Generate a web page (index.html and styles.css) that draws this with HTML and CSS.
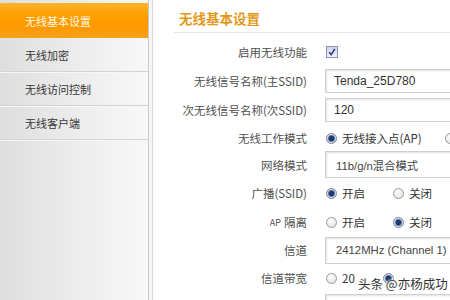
FILE: index.html
```html
<!DOCTYPE html>
<html lang="zh-CN">
<head>
<meta charset="utf-8">
<title>无线基本设置</title>
<link rel="stylesheet" href="styles.css">
</head>
<body>
<div class="page">
  <nav class="sidebar">
    <div class="nav-item active">无线基本设置</div>
    <div class="nav-item">无线加密</div>
    <div class="nav-item">无线访问控制</div>
    <div class="nav-item">无线客户端</div>
  </nav>
  <div class="divider"></div>
  <main class="content">
    <h1 class="title">无线基本设置</h1>
    <div class="form">
      <div class="label">启用无线功能</div>
      <div class="value"><span class="checkbox"><svg viewBox="0 0 10 10" width="10" height="10"><path d="M2.2 5.2 L4.2 7.6 L7.8 1.8" fill="none" stroke="#2b3f8c" stroke-width="1.6"/></svg></span></div>

      <div class="label">无线信号名称(主SSID)</div>
      <div class="value"><div class="field">Tenda_25D780</div></div>

      <div class="label">次无线信号名称(次SSID)</div>
      <div class="value"><div class="field">120</div></div>

      <div class="label">无线工作模式</div>
      <div class="value"><span class="radio on"></span><span class="opt opt-ap">无线接入点(AP)</span><span class="radio"></span></div>

      <div class="label">网络模式</div>
      <div class="value"><div class="field select">11b/g/n混合模式</div></div>

      <div class="label">广播(SSID)</div>
      <div class="value"><span class="radio on"></span><span class="opt">开启</span><span class="radio"></span><span class="opt">关闭</span></div>

      <div class="label"><span class="small">AP</span> 隔离</div>
      <div class="value"><span class="radio"></span><span class="opt">开启</span><span class="radio on"></span><span class="opt">关闭</span></div>

      <div class="label">信道</div>
      <div class="value"><div class="field select">2412MHz (Channel 1)</div></div>

      <div class="label">信道带宽</div>
      <div class="value"><span class="radio"></span><span class="opt">20</span><span class="radio on"></span></div>

      <div class="label"></div>
      <div class="value"><div class="field"></div></div>
    </div>
    <div class="watermark">头条 @亦杨成功</div>
  </main>
</div>
</body>
</html>
```

FILE: styles.css
```css
* { box-sizing: border-box; }
html, body {
  margin: 0;
  padding: 0;
  width: 450px;
  height: 300px;
  overflow: hidden;
  background: #fff;
}
body {
  font-family: "Noto Sans CJK SC", "Liberation Sans", sans-serif;
  color: #444;
}
.page {
  display: flex;
  height: 300px;
}
.sidebar {
  width: 149px;
  flex: none;
  padding-top: 3px;
  border-right: 1px solid #c9c9c9;
  background: linear-gradient(to right, #dedede, #ececec 50%, #f8f8f8);
}
.nav-item {
  height: 34px;
  display: flex;
  align-items: center;
  padding-left: 25px;
  font-size: 11px;
  color: #383838;
  border-bottom: 1px solid #d3d3d3;
  box-shadow: 0 1px 0 #f7f7f7;
}
.nav-item.active {
  height: 35px;
  color: #fff8e0;
  border-bottom: none;
  box-shadow: none;
  background: linear-gradient(#ffb42a, #ff9f00 35%, #ff9800 70%, #f6a21c);
}
.divider {
  width: 4px;
  flex: none;
  background: #f6f6f6;
  border-right: 1px solid #d9d9d9;
}
.content {
  flex: 1;
  position: relative;
  overflow: hidden;
}
.title {
  margin: 0 0 5px 21px;
  height: 33px;
  padding: 9px 0 0 5px;
  font-size: 13.5px;
  line-height: 18px;
  font-weight: bold;
  color: #e3981a;
  border-bottom: 1px solid #e6e6e6;
}
.form {
  display: grid;
  grid-template-columns: 156px 150px;
  grid-template-rows: 28px 29px 30px 26px 27px 30px 28px 28px 28px 28px;
  column-gap: 18px;
  margin-left: -2px;
}
.label {
  display: flex;
  align-items: center;
  justify-content: flex-end;
  font-size: 11.5px;
  color: #505050;
  white-space: nowrap;
}
.label .small { font-size: 9px; margin-right: 3px; }
.value {
  display: flex;
  align-items: center;
  white-space: nowrap;
  font-size: 11.5px;
  color: #333;
}
.checkbox {
  width: 12px;
  height: 12px;
  margin-left: 1px;
  border: 1px solid #8d93b6;
  background: linear-gradient(#cfd3ea, #eef0fa);
  display: flex;
  align-items: center;
  justify-content: center;
}
.field {
  width: 150px;
  height: 24px;
  border: 1px solid #cfcfcf;
  box-shadow: inset 1px 1px 2px #e2e2e2;
  background: #fff;
  font-family: "Liberation Sans", Arial, sans-serif;
  font-size: 12px;
  color: #333;
  padding-left: 8px;
  display: flex;
  align-items: center;
}
.field.select {
  height: 27px;
  padding-left: 10px;
  font-family: "Liberation Sans", "Noto Sans CJK SC", sans-serif;
  font-size: 11.3px;
  color: #444;
}
.radio {
  width: 11px;
  height: 11px;
  flex: none;
  border-radius: 50%;
  border: 1px solid #9a9a9a;
  background: radial-gradient(circle at 40% 35%, #ffffff, #dcdcdc);
  margin-left: 1px;
  position: relative;
}
.radio.on {
  border-color: #7d8595;
  background: radial-gradient(circle, #1d3c6e 0 2.6px, #6f8fb8 3.2px, #d7dde6 4px);
}
.opt {
  margin-left: 5px;
  margin-right: 27px;
}
.opt-ap { margin-right: 22px; }
.watermark {
  position: absolute;
  left: 205px;
  top: 274px;
  font-size: 12.5px;
  color: #333;
  white-space: nowrap;
  text-shadow: 0 0 2px #fff, 0 0 2px #fff, 0 0 3px #fff;
}
```
